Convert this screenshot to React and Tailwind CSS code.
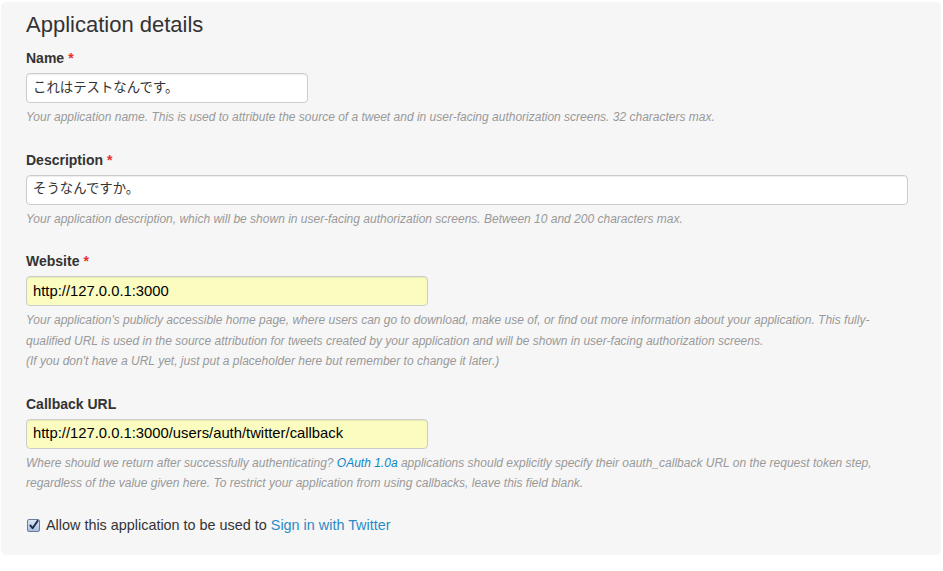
import React from 'react';

const Label = ({ children, required }) => (
  <label className="block text-[14px] leading-[20px] font-bold text-[#333] mb-[5px]">
    {children}
    {required && <span className="text-[#e8312f] ml-[4px]">*</span>}
  </label>
);

const Field = ({ value, width, autofill }) => (
  <div
    className={`h-[30px] ${width} rounded-[4px] border border-[#cccccc] px-[6px] flex items-center shadow-[inset_0_1px_1px_rgba(0,0,0,0.075)] ${
      autofill ? 'bg-[#fbfcc0] text-black text-[14.8px]' : 'bg-white text-[#333] text-[13.4px]'
    }`}
  >
    {value}
  </div>
);

const Help = ({ children }) => (
  <p className="mt-[4px] text-[12px] leading-[20.5px] italic text-[#999] whitespace-nowrap">{children}</p>
);

export default function App() {
  return (
    <div className="min-h-screen bg-white pt-[2px] pl-[1px] font-['Liberation_Sans','Noto_Sans_CJK_JP',sans-serif]">
      <div className="w-[940px] rounded-[5px] bg-[#f6f6f6] pt-[8px] pb-[19px] pl-[25px] pr-[8px]">
        <h2 className="text-[22px] leading-[30px] text-[#333] mb-[8px]">Application details</h2>

        {/* Name */}
        <div className="mb-[22px]">
          <Label required>Name</Label>
          <Field value="これはテストなんです。" width="w-[282px]" />
          <Help>
            Your application name. This is used to attribute the source of a tweet and in user-facing authorization screens. 32 characters max.
          </Help>
        </div>

        {/* Description */}
        <div className="mb-[22px]">
          <Label required>Description</Label>
          <Field value="そうなんですか。" width="w-[882px]" />
          <Help>
            Your application description, which will be shown in user-facing authorization screens. Between 10 and 200 characters max.
          </Help>
        </div>

        {/* Website */}
        <div className="mb-[22px]">
          <Label required>Website</Label>
          <Field value="http://127.0.0.1:3000" width="w-[402px]" autofill />
          <Help>
            Your application's publicly accessible home page, where users can go to download, make use of, or find out more information about your application. This fully-
            <br />
            qualified URL is used in the source attribution for tweets created by your application and will be shown in user-facing authorization screens.
            <br />
            (If you don't have a URL yet, just put a placeholder here but remember to change it later.)
          </Help>
        </div>

        {/* Callback URL */}
        <div className="mb-[22px]">
          <Label>Callback URL</Label>
          <Field value="http://127.0.0.1:3000/users/auth/twitter/callback" width="w-[402px]" autofill />
          <Help>
            Where should we return after successfully authenticating?{' '}
            <a href="#" className="text-[#0a86c8]">OAuth 1.0a</a> applications should explicitly specify their oauth_callback URL on the request token step,
            <br />
            regardless of the value given here. To restrict your application from using callbacks, leave this field blank.
          </Help>
        </div>

        {/* Sign in checkbox */}
        <div className="flex items-center h-[20px] text-[14.4px] text-[#333]">
          <span className="ml-[1px] w-[13px] h-[13px] rounded-[2px] border border-[#6b7a99] bg-gradient-to-b from-[#dbe6f5] to-[#a9bfe0] flex items-center justify-center">
            <svg viewBox="0 0 12 12" className="w-[12px] h-[12px] -mt-[2px]">
              <path d="M2.5 6.5 L5 9.5 L10.5 1.5" fill="none" stroke="#1a2a4a" strokeWidth="2" strokeLinecap="round" strokeLinejoin="round" />
            </svg>
          </span>
          <span className="ml-[6px]">
            Allow this application to be used to <a href="#" className="text-[#2a8bc7]">Sign in with Twitter</a>
          </span>
        </div>
      </div>
    </div>
  );
}
